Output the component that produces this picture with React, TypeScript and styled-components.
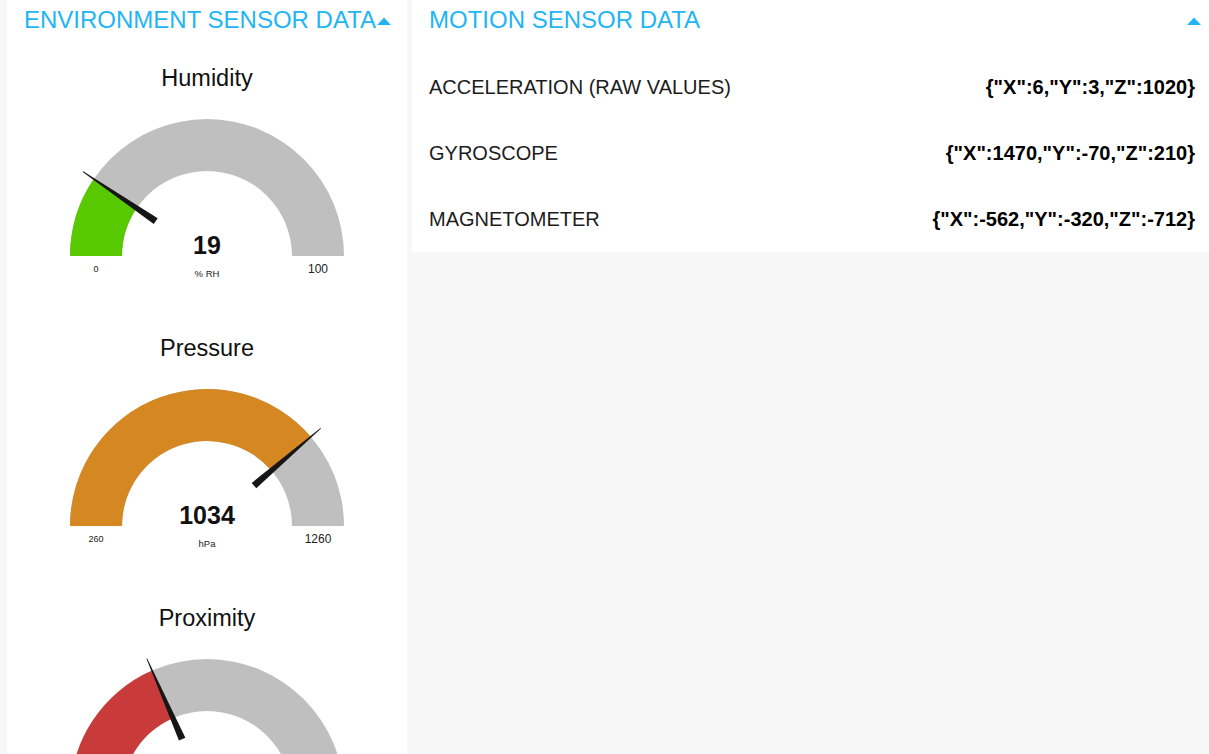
import styled, { createGlobalStyle } from 'styled-components'

const GlobalStyle = createGlobalStyle`
  html, body {
    margin: 0;
    padding: 0;
    background: #f7f7f7;
    font-family: "Liberation Sans", Arial, sans-serif;
    overflow: hidden;
  }
`

const ACCENT = '#22b5f6'

interface IGaugeProps {
  title: string
  value: number
  min: number
  max: number
  units: string
  color: string
}

const CX = 200
const CY = 164
const R_OUT = 137
const R_IN = 85

const pt = (r: number, a: number) =>
  `${(CX + r * Math.cos(a)).toFixed(2)},${(CY - r * Math.sin(a)).toFixed(2)}`

const Gauge: React.FC<IGaugeProps> = (props) => {
  const { title, value, min, max, units, color } = props
  const f = Math.max(0, Math.min(1, (value - min) / (max - min)))
  const a = Math.PI * (1 - f)
  const track = `M ${CX - R_OUT},${CY} A ${R_OUT} ${R_OUT} 0 0 1 ${CX + R_OUT},${CY} L ${CX + R_IN},${CY} A ${R_IN} ${R_IN} 0 0 0 ${CX - R_IN},${CY} Z`
  const fill = `M ${CX - R_OUT},${CY} A ${R_OUT} ${R_OUT} 0 0 1 ${pt(R_OUT, a)} L ${pt(R_IN, a)} A ${R_IN} ${R_IN} 0 0 0 ${CX - R_IN},${CY} Z`
  // needle: wide square base near the hub, thin tip past the outer edge
  const nx = Math.sin(a)
  const ny = Math.cos(a)
  const bx = CX + 62 * Math.cos(a)
  const by = CY - 62 * Math.sin(a)
  const tx = CX + 150 * Math.cos(a)
  const ty = CY - 150 * Math.sin(a)
  const needle = [
    [bx + nx * 3.5, by + ny * 3.5],
    [tx + nx * 0.4, ty + ny * 0.4],
    [tx - nx * 0.4, ty - ny * 0.4],
    [bx - nx * 3.5, by - ny * 3.5],
  ]
    .map((p) => `${p[0].toFixed(2)},${p[1].toFixed(2)}`)
    .join(' ')
  return (
    <GaugeBlock>
      <GaugeTitle>{title}</GaugeTitle>
      <GaugeSvg width="400" height="228" viewBox="0 0 400 228">
        <path d={track} fill="#bfbfbf" />
        <path d={fill} fill={color} />
        <polygon points={needle} fill="#161616" />
        <text x={CX} y={CY - 2} textAnchor="middle" fontSize="25" fontWeight="700" fill="#111">
          {value}
        </text>
        <text x={CX} y={CY + 21} textAnchor="middle" fontSize="9.5" fill="#222">
          {units}
        </text>
        <text x={CX - (R_OUT + R_IN) / 2} y={CY + 16} textAnchor="middle" fontSize="9" fill="#222">
          {min}
        </text>
        <text x={CX + (R_OUT + R_IN) / 2} y={CY + 16.5} textAnchor="middle" fontSize="12" fill="#222">
          {max}
        </text>
      </GaugeSvg>
    </GaugeBlock>
  )
}

const Caret: React.FC = () => (
  <CaretSvg width="14" height="8" viewBox="0 0 14 8">
    <polygon points="0,8 7,0.5 14,8" fill={ACCENT} />
  </CaretSvg>
)

const motionRows = [
  { label: 'ACCELERATION (RAW VALUES)', value: '{"X":6,"Y":3,"Z":1020}' },
  { label: 'GYROSCOPE', value: '{"X":1470,"Y":-70,"Z":210}' },
  { label: 'MAGNETOMETER', value: '{"X":-562,"Y":-320,"Z":-712}' },
]

export default function App() {
  return (
    <Page>
      <GlobalStyle />
      <EnvCard>
        <GroupHeader $padRight={16}>
          <span>ENVIRONMENT SENSOR DATA</span>
          <Caret />
        </GroupHeader>
        <GaugeList>
          <Gauge title="Humidity" value={19} min={0} max={100} units="% RH" color="#58c800" />
          <Gauge title="Pressure" value={1034} min={260} max={1260} units="hPa" color="#d58721" />
          <Gauge title="Proximity" value={94} min={0} max={255} units="" color="#c93b3b" />
        </GaugeList>
      </EnvCard>
      <MotionCard>
        <GroupHeader $padRight={8}>
          <span>MOTION SENSOR DATA</span>
          <Caret />
        </GroupHeader>
        <RowList>
          {motionRows.map((r) => (
            <DataRow key={r.label}>
              <RowLabel>{r.label}</RowLabel>
              <RowValue>{r.value}</RowValue>
            </DataRow>
          ))}
        </RowList>
      </MotionCard>
    </Page>
  )
}

const Page = styled.div`
  display: flex;
  align-items: flex-start;
  gap: 5px;
  padding-left: 7px;
  height: 754px;
  width: 1209px;
  box-sizing: border-box;
`

const EnvCard = styled.div`
  width: 400px;
  flex-shrink: 0;
  align-self: stretch;
  background: #fff;
  overflow: hidden;
`

const MotionCard = styled.div`
  flex: 1;
  background: #fff;
  height: 252px;
`

const GroupHeader = styled.div<{ $padRight: number }>`
  display: flex;
  align-items: center;
  justify-content: space-between;
  height: 40px;
  line-height: 40px;
  padding: 0 ${(p) => p.$padRight}px 0 17px;
  color: ${ACCENT};
  font-size: 24px;
  white-space: nowrap;
`

const CaretSvg = styled.svg`
  display: block;
  flex-shrink: 0;
  margin-top: 2px;
`

const GaugeList = styled.div`
  display: flex;
  flex-direction: column;
  padding-top: 10px;
`

const GaugeBlock = styled.div`
  display: flex;
  flex-direction: column;
  align-items: center;
  height: 270px;
`

const GaugeTitle = styled.div`
  padding-top: 14px;
  height: 28px;
  line-height: 28px;
  font-size: 23.5px;
  color: #111;
`

const GaugeSvg = styled.svg`
  display: block;
  font-family: "Liberation Sans", Arial, sans-serif;
`

const RowList = styled.div`
  display: flex;
  flex-direction: column;
  padding-top: 14px;
`

const DataRow = styled.div`
  display: flex;
  align-items: center;
  justify-content: space-between;
  height: 66px;
  padding: 0 14px 0 17px;
  font-size: 20px;
`

const RowLabel = styled.span`
  color: #1c1c1c;
`

const RowValue = styled.span`
  color: #000;
  font-weight: 700;
`
